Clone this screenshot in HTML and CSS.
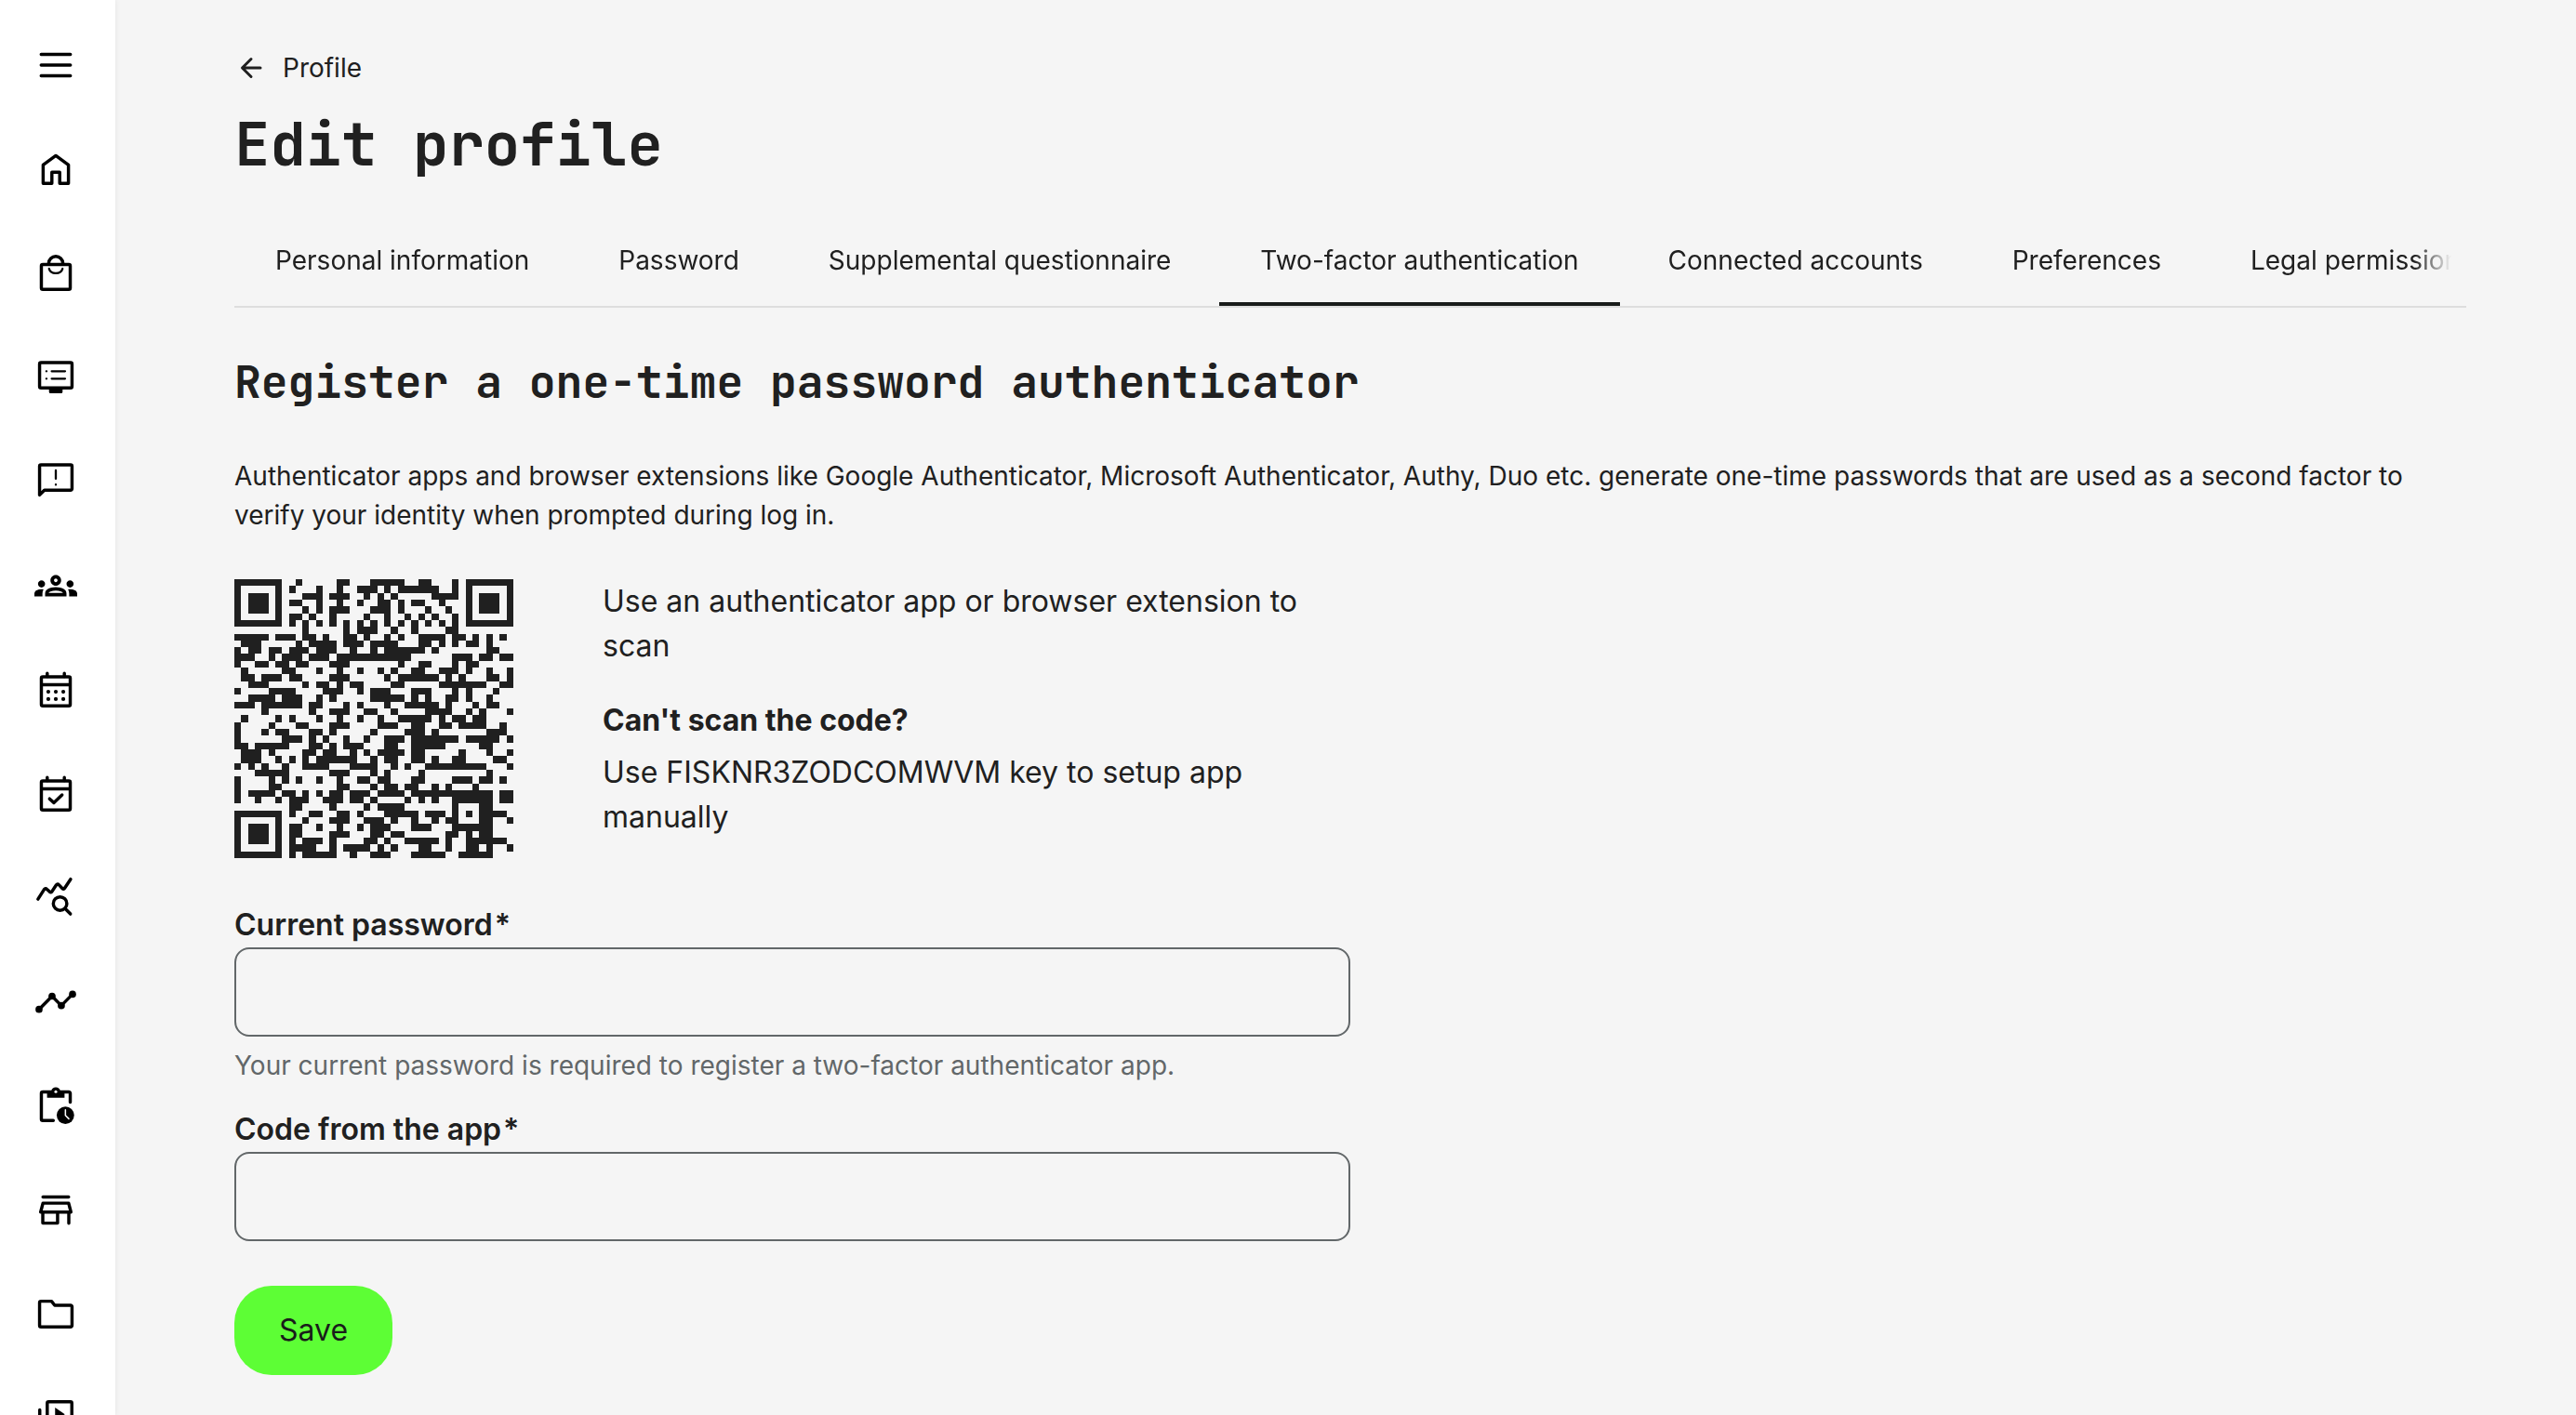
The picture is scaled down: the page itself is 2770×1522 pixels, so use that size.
FILE: index.html
```html
<!DOCTYPE html>
<html lang="en">
<head>
  <meta charset="UTF-8">
  <meta name="viewport" content="width=device-width, initial-scale=1.0">
  <title>Edit profile</title>
  <link rel="stylesheet" href="styles.css">
</head>
<body>
  <nav class="sidebar" aria-label="Main menu">
    <button class="sidebar-item" type="button" aria-label="Menu">
      <svg class="icon" viewBox="0 0 24 24"><path d="M3.8 6h16.4M3.8 12h16.4M3.8 18h16.4"/></svg>
    </button>
    <a class="sidebar-item" href="#" aria-label="Home">
      <svg class="icon" viewBox="0 0 24 24"><path d="M4.9 9.6 12 4.4l7.1 5.2V20h-4.9v-6.3H9.8V20H4.9z"/></svg>
    </a>
    <a class="sidebar-item" href="#" aria-label="Shop">
      <svg class="icon" viewBox="0 0 24 24"><rect x="3.9" y="7" width="16.2" height="14" rx=".8"/><path d="M8 6.5a4 4 0 0 1 8 0"/><path class="thin" d="M8.2 9.4a3.9 3.3 0 0 0 7.6 0"/></svg>
    </a>
    <a class="sidebar-item" href="#" aria-label="Programs">
      <svg class="icon" viewBox="0 0 24 24"><rect x="2.9" y="3.7" width="18.2" height="14.2" rx=".8"/><path class="thin" d="M6.7 8.5h.1M6.7 12.7h.1M9.7 8.5h7.5M9.7 12.7h7.5"/><path class="fill" d="M8.2 18h7.6v2.1a.8.8 0 0 1-.8.8H9a.8.8 0 0 1-.8-.8z"/></svg>
    </a>
    <a class="sidebar-item" href="#" aria-label="Announcements">
      <svg class="icon" viewBox="0 0 24 24"><path d="M2.9 19.5V3.4a.8.8 0 0 1 .8-.8h16.6a.8.8 0 0 1 .8.8V16a.8.8 0 0 1-.8.8H5.6z"/><path class="thin" d="M12 5.7v4.7M12 13.7v.1"/></svg>
    </a>
    <a class="sidebar-item" href="#" aria-label="Groups">
      <svg class="icon" viewBox="0 0 24 24"><path class="fill" d="M4 13c1.1 0 2-.9 2-2s-.9-2-2-2-2 .9-2 2 .9 2 2 2zm1.13 1.1c-.37-.06-.74-.1-1.13-.1-.99 0-1.93.21-2.78.58C.48 14.9 0 15.62 0 16.43V18h4.5v-1.61c0-.83.23-1.61.63-2.29zM20 13c1.1 0 2-.9 2-2s-.9-2-2-2-2 .9-2 2 .9 2 2 2zm4 3.43c0-.81-.48-1.53-1.22-1.85-.85-.37-1.79-.58-2.78-.58-.39 0-.76.04-1.13.1.4.68.63 1.46.63 2.29V18H24v-1.57zm-7.76-2.78c-1.17-.52-2.61-.9-4.24-.9s-3.07.39-4.24.9C6.68 14.13 6 15.21 6 16.39V18h12v-1.61c0-1.18-.68-2.26-1.76-2.74zM8.07 16c.09-.23.13-.39.91-.69.97-.38 1.99-.56 3.02-.56s2.05.18 3.02.56c.77.3.81.46.91.69H8.07zM12 8c.55 0 1 .45 1 1s-.45 1-1 1-1-.45-1-1 .45-1 1-1m0-2c-1.66 0-3 1.34-3 3s1.34 3 3 3 3-1.34 3-3-1.34-3-3-3z"/></svg>
    </a>
    <a class="sidebar-item" href="#" aria-label="Calendar">
      <svg class="icon" viewBox="0 0 24 24"><rect x="3.9" y="4.7" width="16.2" height="16.3" rx=".8"/><path d="M4 9.1h16M7.2 4.5V2.7M16.8 4.5V2.7"/><g class="fill"><circle cx="7.8" cy="13.1" r="1.1"/><circle cx="12" cy="13.1" r="1.1"/><circle cx="16.2" cy="13.1" r="1.1"/><circle cx="7.8" cy="17.2" r="1.1"/><circle cx="12" cy="17.2" r="1.1"/><circle cx="16.2" cy="17.2" r="1.1"/></g></svg>
    </a>
    <a class="sidebar-item" href="#" aria-label="Events">
      <svg class="icon" viewBox="0 0 24 24"><rect x="3.9" y="4.7" width="16.2" height="16.3" rx=".8"/><path d="M4 9.1h16M7.2 4.5V2.7M16.8 4.5V2.7M8.5 14.7l2.4 2.2 4.6-4.4"/></svg>
    </a>
    <a class="sidebar-item" href="#" aria-label="Reports">
      <svg class="icon" viewBox="0 0 24 24"><path d="m2 12.6 3.5-5.5q.7-.9 1.5-.1l1.5 1.4q.8.7 1.4-.2l2.4-3.6q.7-.9 1.4-.1l1.9 2q.8.8 1.4-.1l3.3-5"/><circle cx="14.4" cy="15.1" r="3.8"/><path d="m17.2 17.9 3 3"/></svg>
    </a>
    <a class="sidebar-item" href="#" aria-label="Progress">
      <svg class="icon" viewBox="0 0 24 24"><path d="m2.6 16 7.3-7.4 5.2 5.3 6.3-6.4"/><g class="fill"><circle cx="2.6" cy="16" r="2"/><circle cx="9.9" cy="8.6" r="2"/><circle cx="15.1" cy="13.9" r="2"/><circle cx="21.4" cy="7.5" r="2"/></g></svg>
    </a>
    <a class="sidebar-item" href="#" aria-label="Pending tasks">
      <svg class="icon" viewBox="0 0 24 24"><path d="M10.6 20H4.7a.8.8 0 0 1-.8-.8V4.7a.8.8 0 0 1 .8-.8h14.6a.8.8 0 0 1 .8.8v5"/><path class="fill" d="M7.1 3.2h2.4a2.6 2.6 0 0 1 5 0h2.4v4H7.1z"/><circle class="hole" cx="12" cy="3.8" r=".8"/><circle class="fill" cx="17.4" cy="17" r="4.9"/><path class="hands" d="M17.4 14v3.1l1.9 1.9"/></svg>
    </a>
    <a class="sidebar-item" href="#" aria-label="Store">
      <svg class="icon" viewBox="0 0 24 24"><path d="M4.8 4.4h14.4M4.8 7.9h14.4l1.3 5h-17zM4.7 13.2v5.9H13v-5.9M19.3 13.2v6"/></svg>
    </a>
    <a class="sidebar-item" href="#" aria-label="Files">
      <svg class="icon" viewBox="0 0 24 24"><path d="M2.9 5.3a.8.8 0 0 1 .8-.8h5.9l1.8 2.3h8.9a.8.8 0 0 1 .8.8v10.5a.8.8 0 0 1-.8.8H3.7a.8.8 0 0 1-.8-.8z"/></svg>
    </a>
    <a class="sidebar-item" href="#" aria-label="Videos">
      <svg class="icon" viewBox="0 0 24 24"><rect x="7.2" y="2.5" width="13.8" height="13.8" rx=".8"/><path d="M3 7v13.2h14"/><path class="fill" d="M11.6 5.8v7.4l5.5-3.7z"/></svg>
    </a>
  </nav>

  <main class="content">
    <a class="back" href="#">
      <svg class="back-icon" viewBox="0 0 36 36"><path d="M28 18H9M18 8.5 8.5 18l9.5 9.5"/></svg>
      Profile
    </a>
    <h1>Edit profile</h1>

    <nav class="tabs" aria-label="Profile sections">
      <div class="tabs-list">
        <a class="tab" href="#">Personal information</a>
        <a class="tab" href="#">Password</a>
        <a class="tab" href="#">Supplemental questionnaire</a>
        <a class="tab active" href="#" aria-current="page">Two-factor authentication</a>
        <a class="tab" href="#">Connected accounts</a>
        <a class="tab" href="#">Preferences</a>
        <a class="tab" href="#">Legal permissions</a>
      </div>
    </nav>

    <h2>Register a one-time password authenticator</h2>
    <p class="intro">Authenticator apps and browser extensions like Google Authenticator, Microsoft Authenticator, Authy, Duo etc. generate one-time passwords that are used as a second factor to verify your identity when prompted during log in.</p>

    <form class="otp-form">
      <div class="setup">
        <svg class="qr" viewBox="0 0 41 41" role="img" aria-label="QR code"><path id="qr-path"/></svg>
        <div class="setup-text">
          <p>Use an authenticator app or browser extension to scan</p>
          <h3>Can't scan the code?</h3>
          <p>Use FISKNR3ZODCOMWVM key to setup app manually</p>
        </div>
      </div>

      <div class="field">
        <label for="password">Current password<span class="required">*</span></label>
        <input type="password" id="password" aria-describedby="password-hint" required>
        <p class="hint" id="password-hint">Your current password is required to register a two-factor authenticator app.</p>
      </div>
      <div class="field">
        <label for="code">Code from the app<span class="required">*</span></label>
        <input type="text" id="code" autocomplete="one-time-code" required>
      </div>
      <button class="save" type="submit">Save</button>
    </form>
  </main>

  <script>
    // Dark modules of the QR code, one line per row, as column ranges
    const qrRows = `
      0-6 9 15-16 20-24 27-28 32 34-40
      0 6 8 12 15 18-20 22 24-29 32 34 40
      0 2-4 6 10-12 14-16 19 21 23 29-32 34 36-38 40
      0 2-4 6 8-9 12 15 18 21-22 24 26-27 30 34 36-38 40
      0 2-4 6 10 12 14-16 20-22 24 28 31 34 36-38 40
      0 6 8-9 11 14 19 22 25 27 29 32 34 40
      0-6 8 10 12 14 16 18 20 22 24 26 28 30 32 34-40
      10 16 18-20 23 26 31-32
      0-4 6-8 10-11 13 16-17 19 22 24 27-30 32-33 35 37 39
      1-3 9 11-14 16-18 20-23 27-28 30 32 34-35 37
      0 2-3 5-6 8-10 12-14 17 20 22-27 29 37-38
      0-2 5 7-9 11-13 15-25 32-34 36-37 39-40
      0 3-4 6-7 9-10 14-16 24 27-28 32 34-35
      1 7-8 12 15 18 21 23 26-27 30-32 34 37 40
      1-2 4-6 8-9 14-16 22 24-29 31 33 37-38 40
      2-4 10 12-13 15 17-18 23-24 30-36 39-40
      0 5-8 13-15 18 20-22 26-28 32 34 38
      2-5 7-9 12 14 20-24 26 28 31-32 34 37
      0-2 4-9 11-12 16 18 22 25-29 31 35 37-38
      4 11 14-16 19-20 23 28-31 34 36 40
      1 6 8 12 15 18 21 24-28 30 32-33 35-36
      0 5 9-10 14-16 21-23 26-27 30-31 33-36 39
      0 4 6-7 11-12 14 20 25-27 29 37-39
      0 7-9 11 13 16 19 22-24 26-32 34-38 40
      0-1 3-7 11-12 14 16-18 22-23 26-30 36-37
      1-3 5 10-11 13-14 17 19 21-24 26-27 33 37 40
      1-3 6 8 10 12-17 20 22-23 26-27 29 32-33 38-39
      0 2 4 7 10-13 17-20 23 25 28-36 40
      3-7 14-16 20 22 27 37
      0 5 7 9 12 15 18-19 21-22 26-27 32-34 36-37 39
      0 5-6 15-16 20 22-23 25-26 29 31 35
      0 2-5 7-8 10 12 14-15 17-19 21-24 26-37 39-40
      0 3 6 8-10 13-15 17-18 20 25 27 29 32-37 39-40
      8-9 14 19 21-24 32 36-37
      0-6 8 11-12 15-16 18 22-26 28-30 32 34 36-39
      0 6 10 14-16 19-21 23 26 29 31-32 36-37 40
      0 2-4 6 8-9 12 15 18 20-22 26-28 32-37
      0 2-4 6 8-9 14-16 20-21 23-24 31-32 34 36-37
      0 2-4 6 8 10-12 14 19-20 22 25-29 31 34-39
      0 6 8-11 14 16-19 21 23 27-28 31 34-35 37 40
      0-6 8 10-14 17 20-22 26-30 33-37`;

    let d = '';
    qrRows.trim().split('\n').forEach((row, y) => {
      row.trim().split(' ').forEach((range) => {
        const [start, end = start] = range.split('-').map(Number);
        d += `M${start} ${y}h${end - start + 1}v1h${start - end - 1}z`;
      });
    });
    document.getElementById('qr-path').setAttribute('d', d);
  </script>
</body>
</html>
```

FILE: styles.css
```css
* {
  box-sizing: border-box;
}

body {
  font-family: Inter, "Open Sans", sans-serif;
  font-size: 28px;
  line-height: 42px;
  margin: 0;
  height: 100vh;
  display: flex;
  overflow: hidden;
  background-color: #f5f5f5;
  color: #202020;
}

h1, h2, h3, p {
  margin: 0;
}

h1, h2 {
  font-family: "JetBrains Mono", "DejaVu Sans Mono", monospace;
  font-weight: 700;
}

a {
  color: inherit;
  text-decoration: none;
}

/* Sidebar */
.sidebar {
  flex: 0 0 124px;
  display: flex;
  flex-direction: column;
  padding-top: 14px;
  overflow: hidden;
  background-color: #fff;
  box-shadow: 0 0 6px rgba(0, 0, 0, 0.08);
}

.sidebar-item {
  flex: 0 0 112px;
  display: flex;
  align-items: center;
  justify-content: center;
  padding: 0 4px 0 0;
  border: none;
  background: none;
  color: #000;
  cursor: pointer;
}

.icon {
  width: 46px;
  height: 46px;
  overflow: visible;
  fill: none;
  stroke: currentColor;
  stroke-width: 1.8;
  stroke-linecap: round;
  stroke-linejoin: round;
}

.icon .thin {
  stroke-width: 1.2;
}

.icon .fill {
  fill: currentColor;
  stroke: none;
}

.icon .hole {
  fill: #fff;
  stroke: none;
}

.icon .hands {
  stroke: #fff;
  stroke-width: 0.8;
}

/* Page */
.content {
  flex: 1;
  min-width: 0;
  padding: 52px 118px 43px 128px;
}

.back {
  display: inline-flex;
  align-items: center;
  gap: 16px;
  vertical-align: top;
}

.back-icon {
  width: 36px;
  height: 36px;
  fill: none;
  stroke: currentColor;
  stroke-width: 3;
  stroke-linecap: round;
  stroke-linejoin: round;
}

h1 {
  margin-top: 21px;
  font-size: 64px;
  line-height: 80px;
}

.tabs {
  margin-top: 36px;
  border-bottom: 2px solid #dedede;
}

.tabs-list {
  display: flex;
  gap: 8px;
  overflow: hidden;
  white-space: nowrap;
  -webkit-mask-image: linear-gradient(to left, transparent 16px, #000 56px);
  mask-image: linear-gradient(to left, transparent 16px, #000 56px);
}

.tab {
  flex: none;
  padding: 28px 44px 24px;
  border-bottom: 4px solid transparent;
}

.tab.active {
  border-color: #191c1a;
}

h2 {
  margin-top: 50px;
  font-size: 48px;
  line-height: 60px;
}

.intro {
  margin-top: 50px;
}

/* Form */
.otp-form {
  max-width: 1200px;
  margin-top: 48px;
  font-size: 32px;
  line-height: 48px;
}

.setup {
  display: flex;
  gap: 96px;
  margin-bottom: 48px;
}

.qr {
  flex: none;
  width: 300px;
  height: 300px;
  fill: #202020;
  shape-rendering: crispEdges;
}

.setup-text h3 {
  margin: 32px 0 8px;
  font-size: 32px;
  font-weight: 700;
}

.field {
  margin-bottom: 24px;
}

.field label {
  display: block;
  font-weight: 600;
}

.required {
  margin-left: 2px;
}

.field input {
  display: block;
  width: 100%;
  height: 96px;
  padding: 0 24px;
  border: 2px solid #626769;
  border-radius: 16px;
  background: none;
  font: inherit;
  color: inherit;
}

.hint {
  margin-top: 10px;
  font-size: 28px;
  line-height: 42px;
  color: #626769;
}

.save {
  height: 96px;
  margin-top: 24px;
  padding: 0 48px;
  border: none;
  border-radius: 40px;
  background-color: #5dfe35;
  font: inherit;
  color: #191c1a;
  cursor: pointer;
}
```
